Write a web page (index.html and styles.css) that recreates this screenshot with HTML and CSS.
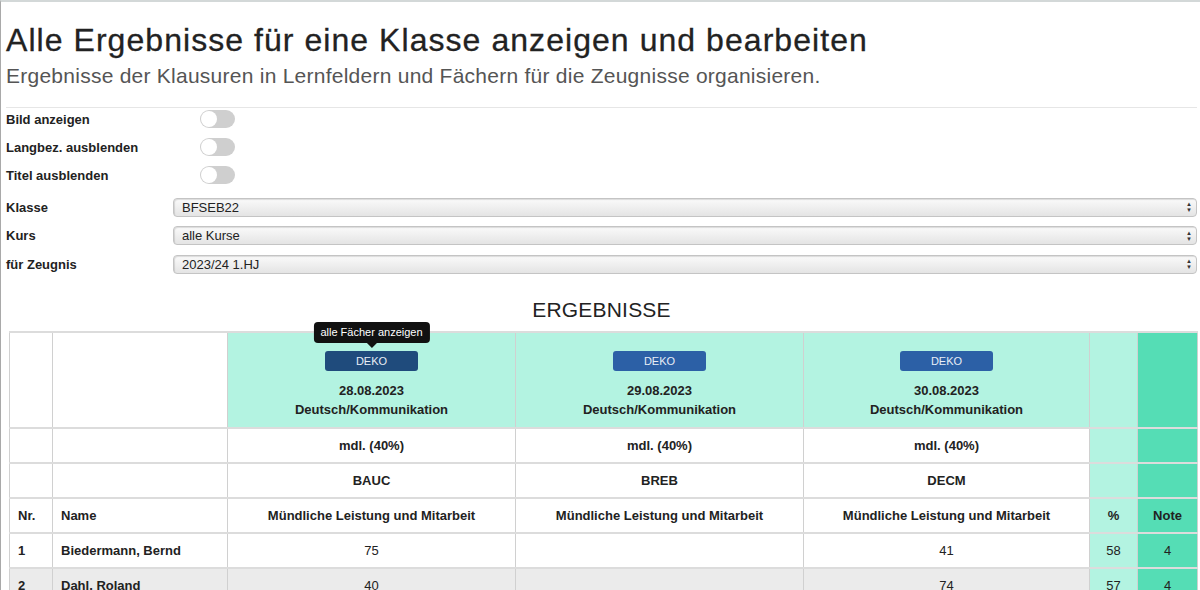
FILE: index.html
```html
<!DOCTYPE html>
<html lang="de">
<head>
    <meta charset="UTF-8">
    <meta name="viewport" content="width=device-width, initial-scale=1.0">
    <title>Ergebnisse</title>
    <link rel="stylesheet" href="styles.css">
</head>
<body>
    <div class="page">
        <h1 class="title">Alle Ergebnisse für eine Klasse anzeigen und bearbeiten</h1>
        <p class="lead">Ergebnisse der Klausuren in Lernfeldern und Fächern für die Zeugnisse organisieren.</p>
        <hr class="rule">

        <div class="options">
            <div class="opt-row"><span class="opt-label">Bild anzeigen</span><span class="switch"></span></div>
            <div class="opt-row"><span class="opt-label">Langbez. ausblenden</span><span class="switch"></span></div>
            <div class="opt-row"><span class="opt-label">Titel ausblenden</span><span class="switch"></span></div>
        </div>

        <div class="filters">
            <div class="filter-row">
                <span class="filter-label">Klasse</span>
                <div class="select"><span>BFSEB22</span><span class="arrows">&#9650;<br>&#9660;</span></div>
            </div>
            <div class="filter-row">
                <span class="filter-label">Kurs</span>
                <div class="select"><span>alle Kurse</span><span class="arrows">&#9650;<br>&#9660;</span></div>
            </div>
            <div class="filter-row">
                <span class="filter-label">für Zeugnis</span>
                <div class="select"><span>2023/24 1.HJ</span><span class="arrows">&#9650;<br>&#9660;</span></div>
            </div>
        </div>

        <h2 class="section">ERGEBNISSE</h2>

        <table class="results">
            <colgroup>
                <col class="c-nr">
                <col class="c-name">
                <col class="c-subj">
                <col class="c-subj">
                <col class="c-subj3">
                <col class="c-pct">
                <col class="c-note">
            </colgroup>
            <tr class="head-top">
                <td></td>
                <td></td>
                <td class="subj">
                    <div class="btn-wrap">
                        <span class="tip">alle Fächer anzeigen</span>
                        <span class="btn hover">DEKO</span>
                    </div>
                    <div class="date">28.08.2023</div>
                    <div class="fach">Deutsch/Kommunikation</div>
                </td>
                <td class="subj">
                    <div class="btn-wrap"><span class="btn">DEKO</span></div>
                    <div class="date">29.08.2023</div>
                    <div class="fach">Deutsch/Kommunikation</div>
                </td>
                <td class="subj">
                    <div class="btn-wrap"><span class="btn">DEKO</span></div>
                    <div class="date">30.08.2023</div>
                    <div class="fach">Deutsch/Kommunikation</div>
                </td>
                <td class="pct"></td>
                <td class="note"></td>
            </tr>
            <tr>
                <td></td>
                <td></td>
                <td class="mid b">mdl. (40%)</td>
                <td class="mid b">mdl. (40%)</td>
                <td class="mid b">mdl. (40%)</td>
                <td class="pct"></td>
                <td class="note"></td>
            </tr>
            <tr>
                <td></td>
                <td></td>
                <td class="mid b">BAUC</td>
                <td class="mid b">BREB</td>
                <td class="mid b">DECM</td>
                <td class="pct"></td>
                <td class="note"></td>
            </tr>
            <tr>
                <td class="b">Nr.</td>
                <td class="b">Name</td>
                <td class="mid b">Mündliche Leistung und Mitarbeit</td>
                <td class="mid b">Mündliche Leistung und Mitarbeit</td>
                <td class="mid b">Mündliche Leistung und Mitarbeit</td>
                <td class="pct b">%</td>
                <td class="note b">Note</td>
            </tr>
            <tr>
                <td class="b">1</td>
                <td class="b">Biedermann, Bernd</td>
                <td class="mid">75</td>
                <td class="mid"></td>
                <td class="mid">41</td>
                <td class="pct">58</td>
                <td class="note">4</td>
            </tr>
            <tr class="alt">
                <td class="b">2</td>
                <td class="b">Dahl, Roland</td>
                <td class="mid">40</td>
                <td class="mid"></td>
                <td class="mid">74</td>
                <td class="pct">57</td>
                <td class="note">4</td>
            </tr>
        </table>
    </div>
</body>
</html>
```

FILE: styles.css
```css
* {
    margin: 0;
    padding: 0;
    box-sizing: border-box;
}

body {
    font-family: "Liberation Sans", Arial, sans-serif;
    color: #222;
    background: #fff;
    overflow: hidden;
}

.page {
    border-top: 2px solid #d3d8d8;
    border-left: 1px solid #a9a9a9;
    padding: 0 3px 40px 5px;
    min-height: 590px;
}

.title {
    font-size: 32px;
    font-weight: normal;
    letter-spacing: 1.05px;
    line-height: 36px;
    padding-top: 20px;
    color: #222;
    -webkit-text-stroke: 0.3px #222;
}

.lead {
    font-size: 21px;
    letter-spacing: 0.25px;
    line-height: 24px;
    color: #555;
    margin-top: 6px;
}

.rule {
    border: 0;
    border-top: 1px solid #e6e6e6;
    margin-top: 19px;
}

/* Schalter */
.options {
    margin-top: -3px;
}

.opt-row {
    display: flex;
    align-items: center;
    height: 28px;
}

.opt-label {
    width: 194px;
    font-size: 13px;
    font-weight: bold;
}

.switch {
    position: relative;
    width: 35px;
    height: 18px;
    border-radius: 9px;
    background: #cfcfcf;
}

.switch::after {
    content: "";
    position: absolute;
    left: 1px;
    top: 1px;
    width: 16px;
    height: 16px;
    border-radius: 50%;
    background: #fff;
}

/* Auswahlfelder */
.filters {
    padding-top: 4px;
}

.filter-row {
    display: flex;
    align-items: center;
    height: 28.5px;
}

.filter-label {
    width: 167px;
    font-size: 13px;
    font-weight: bold;
}

.select {
    flex: 1;
    display: flex;
    justify-content: space-between;
    align-items: center;
    height: 19px;
    padding: 0 4px 0 8px;
    font-size: 13px;
    border: 1px solid #c4c4c4;
    border-radius: 4px;
    background: linear-gradient(#fafafa, #e4e4e4);
    box-shadow: inset 1px 1px 1px rgba(0, 0, 0, 0.12);
}

.select .arrows {
    font-size: 6px;
    line-height: 6px;
    color: #333;
    text-align: center;
}

.section {
    text-align: center;
    font-size: 21px;
    font-weight: normal;
    letter-spacing: 0.2px;
    line-height: 24px;
    margin-top: 19px;
    color: #222;
}

/* Tabelle */
.results {
    margin: 9px 0 0 3px;
    width: 1188px;
    border-collapse: collapse;
    table-layout: fixed;
    font-size: 13px;
}

.results .c-nr { width: 43px; }
.results .c-name { width: 175px; }
.results .c-subj { width: 288px; }
.results .c-subj3 { width: 286px; }
.results .c-pct { width: 48px; }
.results .c-note { width: 60px; }

.results td {
    height: 35px;
    padding: 0 8px;
    border-top: 2px solid #dcdcdc;
    border-bottom: 2px solid #dcdcdc;
    border-left: 1px solid #d0d0d0;
    border-right: 1px solid #d0d0d0;
    vertical-align: middle;
}

.results .head-top td {
    height: 96px;
}

.results .b {
    font-weight: bold;
}

.results .mid {
    text-align: center;
}

.results .pct {
    background: #b3f3e1;
    text-align: center;
}

.results .note {
    background: #55ddb5;
    text-align: center;
}

.results .subj {
    background: #b3f3e1;
    text-align: center;
    vertical-align: top;
    padding-top: 18px;
    font-weight: bold;
    line-height: 19px;
}

.results .alt td {
    background-color: #ebebeb;
}

.results .alt .pct {
    background: #b3f3e1;
}

.results .alt .note {
    background: #55ddb5;
}

.btn-wrap {
    position: relative;
    height: 20px;
    margin-bottom: 10px;
}

.btn {
    display: inline-block;
    width: 93px;
    height: 20px;
    line-height: 20px;
    border-radius: 3px;
    background: #2c60a6;
    color: #e8eef6;
    font-size: 11px;
    font-weight: normal;
}

.btn.hover {
    background: #1f4b7c;
}

/* Tooltip über dem Knopf */
.tip {
    position: absolute;
    left: 50%;
    bottom: 28px;
    transform: translateX(-50%);
    white-space: nowrap;
    padding: 0 7px;
    height: 21px;
    line-height: 21px;
    border-radius: 4px;
    background: #111;
    color: #fff;
    font-size: 11px;
    font-weight: normal;
}

.tip::after {
    content: "";
    position: absolute;
    left: 50%;
    top: 100%;
    margin-left: -5px;
    border: 5px solid transparent;
    border-top-color: #111;
    border-bottom: 0;
}
```
